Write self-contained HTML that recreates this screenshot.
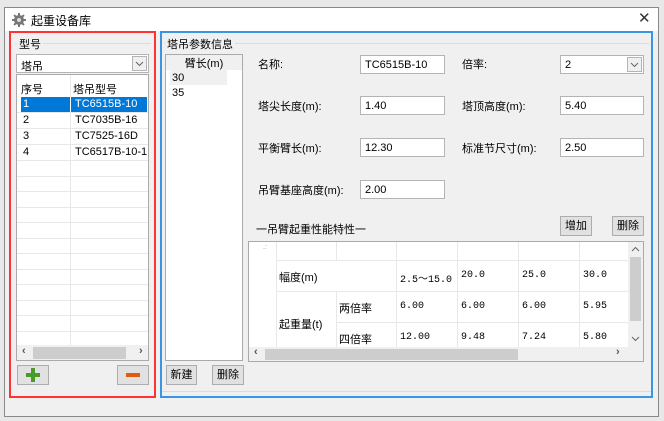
<!DOCTYPE html>
<html><head><meta charset="utf-8"><style>
*{box-sizing:border-box;margin:0;padding:0}
body{width:664px;height:421px;background:#e8e8e8;font-family:"Liberation Sans","Noto Sans CJK SC",sans-serif;font-size:11px;color:#000;position:relative;overflow:hidden}
.a{position:absolute}
.win{left:4px;top:7px;width:655px;height:410px;background:#f0f0f0;border:1px solid #888}
.title{left:5px;top:8px;width:653px;height:23px;background:#fff}
.inp{position:absolute;background:#fff;border:1px solid #b4b4b4;height:19px;padding:3px 0 0 4px;font-size:11px}
.btn{position:absolute;background:#e1e1e1;border:1px solid #adadad;height:20px;text-align:center;font-size:11px;line-height:18px}
.dd{position:absolute;right:1px;top:1px;width:15px;height:15px;border:1px solid #b4b4b4;background:#f0f0f0}
.hl{position:absolute;height:1px;background:#e8e8e8}
.vl{position:absolute;width:1px;background:#e8e8e8}
.m{font-family:"Liberation Mono","Noto Sans CJK SC",monospace;font-size:10px}
</style></head><body>
<div class="a win"></div>
<div class="a title"></div>
<svg class="a" style="left:12px;top:13px" width="14" height="14" viewBox="0 0 14 14"><g fill="#777"><circle cx="7" cy="7" r="5"/><rect x="6" y="0" width="2" height="14"/><rect x="0" y="6" width="14" height="2"/><rect x="6" y="0" width="2" height="14" transform="rotate(45 7 7)"/><rect x="6" y="0" width="2" height="14" transform="rotate(-45 7 7)"/></g><circle cx="7" cy="7" r="2" fill="#ddd"/></svg>
<div class="a" style="left:31px;top:12px;font-size:12px">起重设备库</div>
<div class="a" style="left:638px;top:9px;font-size:15px;color:#333">✕</div>

<div class="a" style="left:9px;top:31px;width:147px;height:367px;border:2px solid #f33"></div>
<div class="a" style="left:15px;top:43px;width:136px;height:1px;background:#dcdcdc"></div>
<div class="a" style="left:17px;top:36px;background:#f0f0f0;padding:0 2px">型号</div>
<div class="inp" style="left:16px;top:54px;width:133px;padding-top:3px">塔吊<div class="dd"><svg width="13" height="13" viewBox="0 0 13 13"><path d="M3 5l3.5 3.5L10 5" fill="none" stroke="#666"/></svg></div></div>
<div class="a" style="left:16px;top:74px;width:133px;height:287px;background:#fff;border:1px solid #aaa;overflow:hidden">
 <div class="vl" style="left:53px;top:0;height:270px"></div>
 <div class="a" style="left:4px;top:6px">序号</div><div class="a" style="left:56px;top:6px">塔吊型号</div>
 <div class="a" style="left:4px;top:22px;width:126px;height:15px;background:#0078d7"></div>
 <div class="a" style="left:53px;top:22px;width:1px;height:15px;background:#fff"></div>
 <div class="a" style="left:6px;top:23px;color:#fff">1</div><div class="a" style="left:58px;top:23px;color:#fff">TC6515B-10</div>
 <div class="a" style="left:6px;top:39px">2</div><div class="a" style="left:58px;top:39px">TC7035B-16</div>
 <div class="a" style="left:6px;top:55px">3</div><div class="a" style="left:58px;top:55px">TC7525-16D</div>
 <div class="a" style="left:6px;top:71px">4</div><div class="a" style="left:58px;top:71px">TC6517B-10-1</div>
 <div class="hl" style="left:0;width:133px;top:37px"></div><div class="hl" style="left:0;width:133px;top:53px"></div><div class="hl" style="left:0;width:133px;top:69px"></div><div class="hl" style="left:0;width:133px;top:85px"></div><div class="hl" style="left:0;width:133px;top:101px"></div><div class="hl" style="left:0;width:133px;top:116px"></div><div class="hl" style="left:0;width:133px;top:132px"></div><div class="hl" style="left:0;width:133px;top:147px"></div><div class="hl" style="left:0;width:133px;top:163px"></div><div class="hl" style="left:0;width:133px;top:178px"></div><div class="hl" style="left:0;width:133px;top:194px"></div><div class="hl" style="left:0;width:133px;top:209px"></div><div class="hl" style="left:0;width:133px;top:225px"></div><div class="hl" style="left:0;width:133px;top:240px"></div><div class="hl" style="left:0;width:133px;top:256px"></div>
 <div class="a" style="left:0;top:270px;width:131px;height:15px;background:#f0f0f0"></div>
 <div class="a" style="left:16px;top:272px;width:93px;height:12px;background:#cdcdcd"></div>
 <div class="a" style="left:5px;top:270px;color:#555;font-weight:bold">‹</div><div class="a" style="left:122px;top:270px;color:#555;font-weight:bold">›</div>
</div>
<div class="btn" style="left:17px;top:365px;width:32px"><svg width="14" height="14" style="margin-top:2px" viewBox="0 0 14 14"><path d="M5 0h4v5h5v4H9v5H5V9H0V5h5z" fill="#4a9a2a"/></svg></div>
<div class="btn" style="left:117px;top:365px;width:32px"><div style="margin:7px auto 0;width:14px;height:4px;background:#e05a10"></div></div>

<div class="a" style="left:160px;top:31px;width:493px;height:367px;border:2px solid #3a96e0"></div>
<div class="a" style="left:164px;top:43px;width:485px;height:1px;background:#dcdcdc"></div>
<div class="a" style="left:165px;top:36px;background:#f0f0f0;padding:0 2px">塔吊参数信息</div>
<div class="a" style="left:162px;top:391px;width:489px;height:1px;background:#dcdcdc"></div>
<div class="a" style="left:165px;top:54px;width:78px;height:307px;background:#fff;border:1px solid #aaa">
 <div class="a" style="left:0;top:0;width:76px;height:15px;background:#f0f0f0;text-align:center">臂长(m)</div>
 <div class="a" style="left:4px;top:15px;width:57px;height:15px;background:#f0f0f0"></div>
 <div class="a" style="left:6px;top:17px">30</div><div class="a" style="left:6px;top:32px">35</div>
</div>
<div class="btn" style="left:166px;top:365px;width:31px">新建</div>
<div class="btn" style="left:212px;top:365px;width:32px">删除</div>

<div class="a" style="left:258px;top:56px">名称:</div>
<div class="a" style="left:258px;top:98px">塔尖长度(m):</div>
<div class="a" style="left:258px;top:140px">平衡臂长(m):</div>
<div class="a" style="left:258px;top:182px">吊臂基座高度(m):</div>
<div class="inp" style="left:360px;top:55px;width:85px">TC6515B-10</div>
<div class="inp" style="left:360px;top:96px;width:85px">1.40</div>
<div class="inp" style="left:360px;top:138px;width:85px">12.30</div>
<div class="inp" style="left:360px;top:180px;width:85px">2.00</div>
<div class="a" style="left:462px;top:56px">倍率:</div>
<div class="a" style="left:462px;top:98px">塔顶高度(m):</div>
<div class="a" style="left:462px;top:140px">标准节尺寸(m):</div>
<div class="inp" style="left:560px;top:55px;width:84px">2<div class="dd"><svg width="13" height="13" viewBox="0 0 13 13"><path d="M3 5l3.5 3.5L10 5" fill="none" stroke="#666"/></svg></div></div>
<div class="inp" style="left:560px;top:96px;width:84px">5.40</div>
<div class="inp" style="left:560px;top:138px;width:84px">2.50</div>

<div class="a" style="left:256px;top:221px">一吊臂起重性能特性一</div>
<div class="btn" style="left:560px;top:216px;width:32px">增加</div>
<div class="btn" style="left:612px;top:216px;width:32px">删除</div>

<div class="a" style="left:248px;top:241px;width:396px;height:121px;background:#fff;border:1px solid #aaa;overflow:hidden">
 <div class="a" style="left:14px;top:2px;font-size:7px;color:#999">.:</div>
 <div class="hl" style="left:27px;width:352px;top:18px"></div>
 <div class="hl" style="left:27px;width:352px;top:49px"></div>
 <div class="hl" style="left:87px;width:292px;top:80px"></div>
 <div class="vl" style="left:27px;top:0;height:105px"></div>
 <div class="vl" style="left:87px;top:0;height:18px"></div><div class="vl" style="left:87px;top:49px;height:56px"></div>
 <div class="vl" style="left:147px;top:0;height:105px"></div><div class="vl" style="left:208px;top:0;height:105px"></div><div class="vl" style="left:269px;top:0;height:105px"></div><div class="vl" style="left:330px;top:0;height:105px"></div>
 <div class="a" style="left:30px;top:27px">幅度(m)</div>
 <div class="a" style="left:30px;top:74px">起重量(t)</div>
 <div class="a" style="left:90px;top:58px">两倍率</div><div class="a" style="left:90px;top:89px">四倍率</div>
 <div class="a m" style="left:151px;top:28px">2.5～15.0</div><div class="a m" style="left:212px;top:28px">20.0</div><div class="a m" style="left:273px;top:28px">25.0</div><div class="a m" style="left:334px;top:28px">30.0</div>
 <div class="a m" style="left:151px;top:59px">6.00</div><div class="a m" style="left:212px;top:59px">6.00</div><div class="a m" style="left:273px;top:59px">6.00</div><div class="a m" style="left:334px;top:59px">5.95</div>
 <div class="a m" style="left:151px;top:90px">12.00</div><div class="a m" style="left:212px;top:90px">9.48</div><div class="a m" style="left:273px;top:90px">7.24</div><div class="a m" style="left:334px;top:90px">5.80</div>
 <div class="a" style="left:379px;top:0;width:15px;height:105px;background:#f0f0f0"></div>
 <div class="a" style="left:381px;top:15px;width:11px;height:64px;background:#cdcdcd"></div>
 <svg class="a" style="left:380px;top:2px" width="13" height="10" viewBox="0 0 13 10"><path d="M3 7l3.5-3.5L10 7" fill="none" stroke="#666"/></svg>
 <svg class="a" style="left:380px;top:92px" width="13" height="10" viewBox="0 0 13 10"><path d="M3 3l3.5 3.5L10 3" fill="none" stroke="#666"/></svg>
 <div class="a" style="left:0;top:105px;width:394px;height:14px;background:#f0f0f0"></div>
 <div class="a" style="left:16px;top:107px;width:253px;height:11px;background:#cdcdcd"></div>
 <div class="a" style="left:5px;top:104px;color:#555;font-weight:bold">‹</div><div class="a" style="left:367px;top:104px;color:#555;font-weight:bold">›</div>
</div>
</body></html>
